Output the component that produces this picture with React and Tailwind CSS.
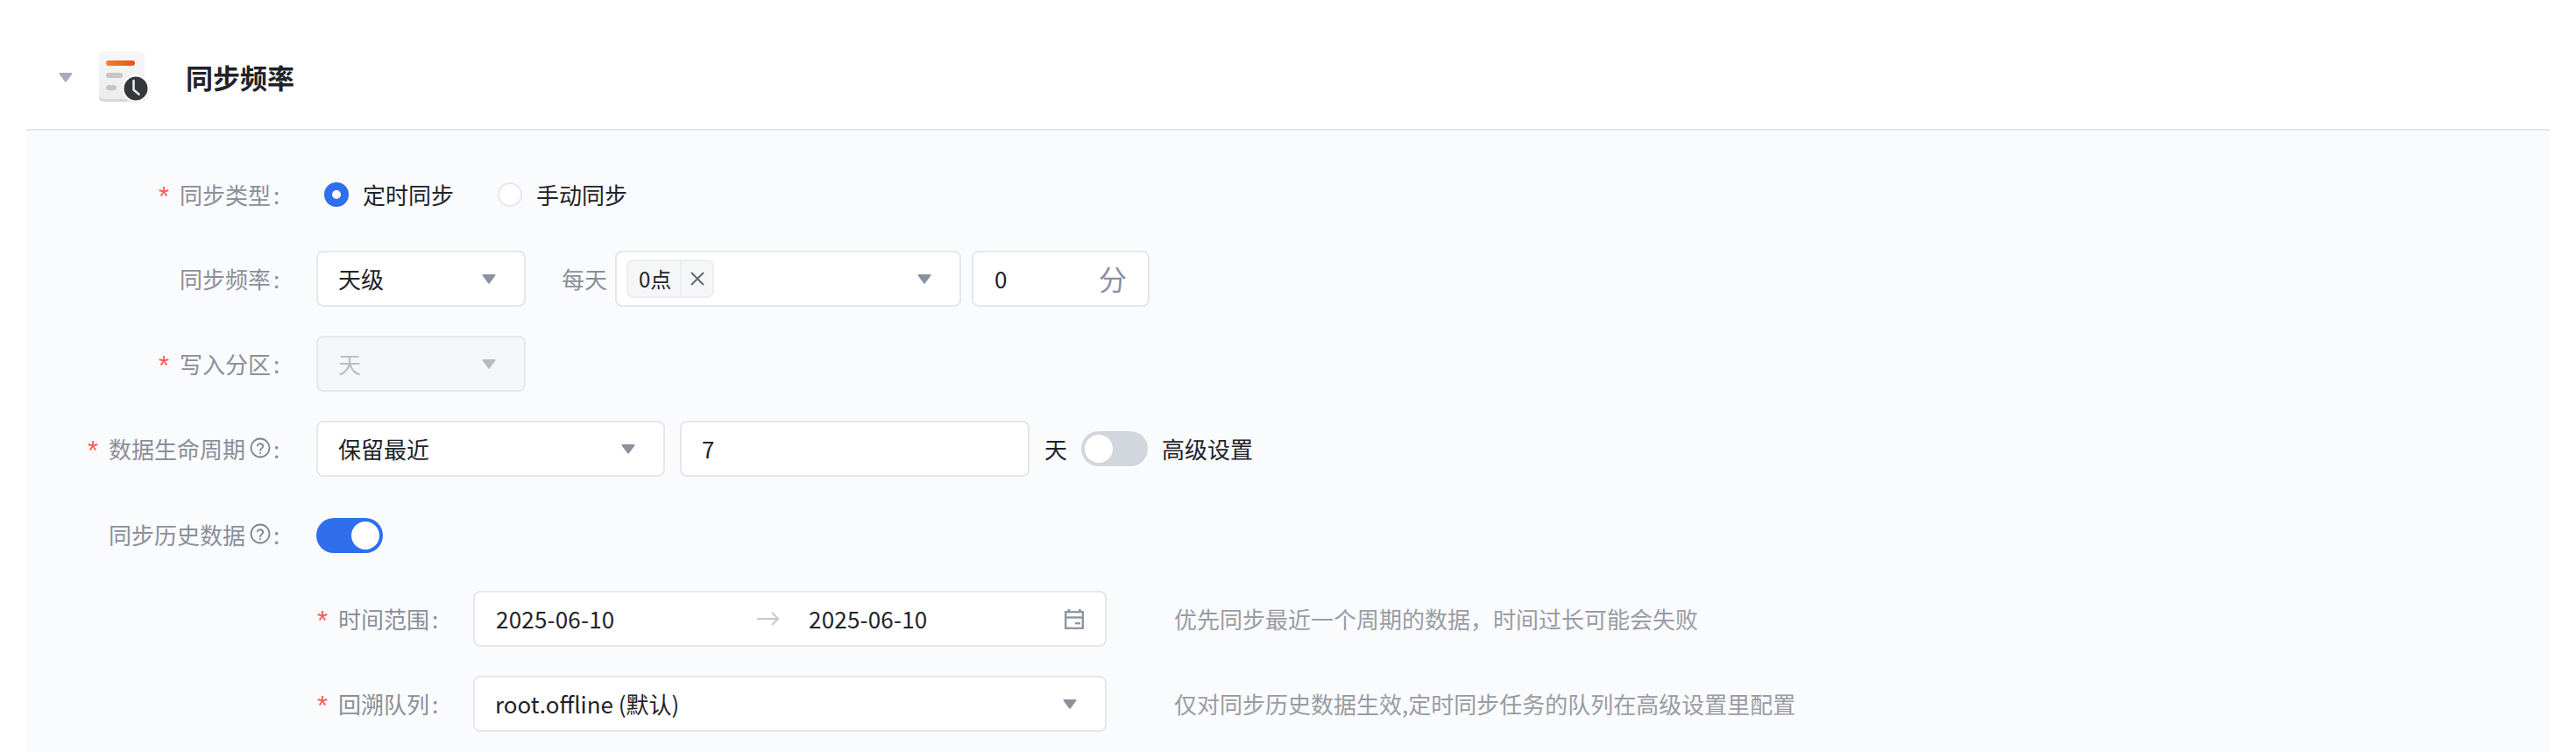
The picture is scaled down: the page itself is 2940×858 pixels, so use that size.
const Caret = ({ className = "text-[#8a919f]" }) => (
  <svg width="16" height="12" viewBox="0 0 16 12" className={className}>
    <path d="M1.5 1h13a1 1 0 0 1 .8 1.6l-6.5 8.6a1 1 0 0 1-1.6 0L.7 2.600A1 1 0 0 1 1.500 1z" fill="currentColor" />
  </svg>
);

const HelpIcon = () => (
  <svg width="24" height="24" viewBox="0 0 24 24" fill="none" stroke="currentColor" strokeWidth="1.800" className="text-[#80858f]">
    <circle cx="12" cy="12" r="10.500" />
    <path d="M8.800 9.400a3.300 3.300 0 0 1 6.400.9c0 2.200-3.200 2.500-3.200 4.700" strokeLinecap="round" />
    <circle cx="12" cy="18" r="1.100" fill="currentColor" stroke="none" />
  </svg>
);

const FreqIcon = () => (
  <svg width="60" height="60" viewBox="0 0 60 60">
    <defs>
      <linearGradient id="orange" x1="0" y1="0" x2="1" y2="0">
        <stop offset="0" stopColor="#f08030" />
        <stop offset="1" stopColor="#ea4f20" />
      </linearGradient>
      <linearGradient id="sheet" x1="0" y1="0" x2="0" y2="1">
        <stop offset="0" stopColor="#f7f7f7" />
        <stop offset="1" stopColor="#ececec" />
      </linearGradient>
    </defs>
    <rect x="1" y="1" width="52" height="57" rx="5" fill="#d6d6d6" />
    <rect x="1" y="0" width="52" height="55" rx="5" fill="url(#sheet)" />
    <rect x="9" y="11" width="33" height="6" rx="3" fill="url(#orange)" />
    <rect x="9" y="25" width="19" height="6" rx="3" fill="#c6c6c6" />
    <rect x="9" y="39" width="12" height="6" rx="3" fill="#c6c6c6" />
    <circle cx="43" cy="43" r="16.500" fill="#e4e4e4" />
    <circle cx="43" cy="42.500" r="16" fill="#ffffff" />
    <circle cx="43" cy="43" r="13.500" fill="#36373a" />
    <path d="M40.500 34v10.500l6 5" fill="none" stroke="#e8e8e8" strokeWidth="2.600" strokeLinecap="round" strokeLinejoin="round" />
  </svg>
);

const CalendarIcon = () => (
  <svg width="22" height="23" viewBox="0 0 22 23" fill="none" stroke="#8f97a3" strokeWidth="2.400">
    <rect x="1.200" y="3.200" width="19.600" height="18.600" />
    <path d="M1 9.500h20" />
    <path d="M5 0v3M17.500 0v3" strokeWidth="2.800" />
    <rect x="12" y="15" width="6" height="2.400" fill="#8f97a3" stroke="none" />
  </svg>
);

const Label = ({ required, help, width = "w-[289px]", children }) => (
  <div className={`${width} shrink-0 flex items-center justify-end pb-[2px] text-[26px] text-[#8a8f99]`}>
    {required && <span className="mr-[12px] font-['Liberation_Sans'] text-[31px] text-[#ff5c5c] leading-none mt-[6px]">*</span>}
    <span>{children}</span>
    {help && <span className="ml-[5px]"><HelpIcon /></span>}
    <span className="w-[7px] ml-[3px]">:</span>
  </div>
);

const Box = ({ width, disabled, children }) => (
  <div className={`${width} h-[64px] shrink-0 flex items-center justify-between border-2 rounded-[8px] border-[#e5e7ec] ${disabled ? "bg-[#f5f6f8]" : "bg-white"}`}>
    {children}
  </div>
);

const SelectBox = ({ width, text, disabled }) => (
  <Box width={width} disabled={disabled}>
    <span className={`pl-[23px] pb-[2px] ${disabled ? "text-[#b9bdc6]" : ""}`}>{text}</span>
    <span className="pr-[32px] flex">
      <Caret className={disabled ? "text-[#b4bac4]" : "text-[#8a919f]"} />
    </span>
  </Box>
);

const Toggle = ({ on }) => (
  <div className={`w-[76px] h-[40px] rounded-full flex items-center px-[4px] ${on ? "bg-[#2f6fed] justify-end" : "bg-[#d2d6dd] justify-start"}`}>
    <div className="w-[32px] h-[32px] rounded-full bg-white" />
  </div>
);

const Radio = ({ on, text }) => (
  <div className="flex items-center gap-[16px]">
    {on ? (
      <span className="w-[28px] h-[28px] rounded-full bg-[#2f6fed] flex items-center justify-center">
        <span className="w-[10px] h-[10px] rounded-full bg-white" />
      </span>
    ) : (
      <span className="w-[28px] h-[28px] rounded-full bg-white border-2 border-[#e5e7ec]" />
    )}
    <span className="pb-[2px]">{text}</span>
  </div>
);

const Row = ({ className = "", children }) => (
  <div className={`h-[64px] flex items-center ${className}`}>{children}</div>
);

export default function App() {
  return (
    <div className="h-screen overflow-hidden bg-white px-[30px] flex flex-col font-['Noto_Sans_CJK_SC',sans-serif] text-[26px] text-[#1f2329]">
      {/* 标题 */}
      <div className="h-[149px] shrink-0 border-b-2 border-[#e3e5ea] flex items-center pt-[29px] pl-[37px]">
        <Caret className="text-[#a5adb8]" />
        <span className="ml-[29px] flex"><FreqIcon /></span>
        <span className="ml-[40px] text-[31px] font-semibold">同步频率</span>
      </div>

      {/* 表单 */}
      <div className="flex-1 bg-[#fafbfd] pt-[40px] flex flex-col gap-[33px]">
        <Row className="pt-[2px]">
          <Label required>同步类型</Label>
          <div className="ml-[51px] flex items-center gap-[50px]">
            <Radio on text="定时同步" />
            <Radio text="手动同步" />
          </div>
        </Row>

        <Row>
          <Label>同步频率</Label>
          <div className="ml-[42px] flex items-center">
            <SelectBox width="w-[239px]" text="天级" />
            <span className="ml-[41px] pb-[2px] text-[#8a8f99]">每天</span>
            <div className="ml-[9px]">
              <Box width="w-[395px]">
                <div className="ml-[11px] w-[100px] h-[44px] flex items-center bg-[#f5f6f8] border-2 border-[#eceef1] rounded-[8px] text-[24px]">
                  <span className="w-[61px] pl-[12px] border-r-2 border-[#eceef1] h-full flex items-center">0点</span>
                  <span className="flex-1 flex justify-center">
                    <svg width="18" height="18" viewBox="0 0 18 18" fill="none" stroke="#5d6470" strokeWidth="1.800">
                      <path d="M2 2l14 14M16 2L2 16" />
                    </svg>
                  </span>
                </div>
                <span className="pr-[32px] flex"><Caret /></span>
              </Box>
            </div>
            <div className="ml-[12px]">
              <Box width="w-[203px]">
                <span className="pl-[24px] pb-[2px]">0</span>
                <span className="pr-[24px] pb-[2px] text-[32px] text-[#8a919f]">分</span>
              </Box>
            </div>
          </div>
        </Row>

        <Row>
          <Label required>写入分区</Label>
          <div className="ml-[42px]">
            <SelectBox width="w-[239px]" text="天" disabled />
          </div>
        </Row>

        <Row>
          <Label required help>数据生命周期</Label>
          <div className="ml-[42px] flex items-center">
            <SelectBox width="w-[398px]" text="保留最近" />
            <div className="ml-[17px]">
              <Box width="w-[399px]">
                <span className="pl-[23px] pb-[2px]">7</span>
              </Box>
            </div>
            <span className="ml-[17px] pb-[2px]">天</span>
            <span className="ml-[16px]"><Toggle /></span>
            <span className="ml-[16px] pb-[2px]">高级设置</span>
          </div>
        </Row>

        <Row className="pt-[2px]">
          <Label help>同步历史数据</Label>
          <div className="ml-[42px] mt-[2px]"><Toggle on /></div>
        </Row>

        <Row>
          <Label required width="w-[470px]">时间范围</Label>
          <div className="ml-[40px] flex items-center">
            <Box width="w-[723px]">
              <span className="pl-[24px] pb-[2px] w-[322px] tracking-[0.2px]">2025-06-10</span>
              <svg width="26" height="16" viewBox="0 0 26 16" fill="none" stroke="#c4c7d0" strokeWidth="2">
                <path d="M0 8h24M17 1l7 7-7 7" />
              </svg>
              <span className="ml-[33px] pb-[2px] flex-1 tracking-[0.2px]">2025-06-10</span>
              <span className="pr-[24px] flex"><CalendarIcon /></span>
            </Box>
            <span className="ml-[77px] pb-[2px] text-[#999ca3]">优先同步最近一个周期的数据，时间过长可能会失败</span>
          </div>
        </Row>

        <Row>
          <Label required width="w-[470px]">回溯队列</Label>
          <div className="ml-[40px] flex items-center">
            <SelectBox width="w-[723px]" text="root.offline (默认)" />
            <span className="ml-[77px] pb-[2px] text-[#999ca3]">仅对同步历史数据生效,定时同步任务的队列在高级设置里配置</span>
          </div>
        </Row>
      </div>
    </div>
  );
}
